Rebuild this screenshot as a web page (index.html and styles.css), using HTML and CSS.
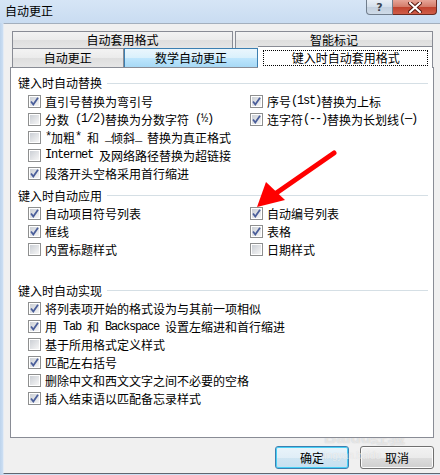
FILE: index.html
```html
<!DOCTYPE html>
<html lang="zh-CN">
<head>
<meta charset="utf-8">
<title>自动更正</title>
<link rel="stylesheet" href="styles.css">
</head>
<body>
<div class="window">
  <div class="titlebar">
    <span class="title">自动更正</span>
    <div class="caption-btns">
      <div class="cap help">?</div>
      <div class="cap close">
        <svg width="14" height="11" viewBox="0 0 14 11"><path d="M2 1 L12 10 M12 1 L2 10" stroke="#5a1a12" stroke-width="4" stroke-linecap="square"/><path d="M2 1 L12 10 M12 1 L2 10" stroke="#fff" stroke-width="2" stroke-linecap="square"/></svg>
      </div>
    </div>
  </div>
  <div class="client">
    <div class="tabs">
      <div class="tabrow row1">
        <div class="tab t1">自动套用格式</div>
        <div class="tab t2">智能标记</div>
      </div>
      <div class="tabrow row2">
        <div class="tab t3">自动更正</div>
        <div class="tab t4 hover">数学自动更正</div>
        <div class="tab t5 selected"><span class="focus">键入时自动套用格式</span></div>
      </div>
    </div>
    <div class="panel">
      <section class="group g1">
        <div class="ghead"><span>键入时自动替换</span></div>
        <div class="cols">
          <div class="col left">
            <label class="opt"><span class="cb on"></span>直引号替换为弯引号</label>
            <label class="opt"><span class="cb"></span><span>分数</span><span class="mono"> (1/2)</span><span>替换为分数字符</span><span class="mono"> (½)</span></label>
            <label class="opt"><span class="cb"></span><span class="mono">*</span><span>加粗</span><span class="mono">* </span><span>和</span><span class="mono"> _</span><span>倾斜</span><span class="mono">_ </span><span>替换为真正格式</span></label>
            <label class="opt"><span class="cb"></span><span class="mono">Internet </span><span>及网络路径替换为超链接</span></label>
            <label class="opt"><span class="cb on"></span>段落开头空格采用首行缩进</label>
          </div>
          <div class="col right">
            <label class="opt"><span class="cb on"></span><span>序号</span><span class="mono">(1st)</span><span>替换为上标</span></label>
            <label class="opt"><span class="cb on"></span><span>连字符</span><span class="mono">(--)</span><span>替换为长划线</span><span class="mono">(—)</span></label>
          </div>
        </div>
      </section>
      <section class="group g2">
        <div class="ghead"><span>键入时自动应用</span></div>
        <div class="cols">
          <div class="col left">
            <label class="opt"><span class="cb on"></span>自动项目符号列表</label>
            <label class="opt"><span class="cb on"></span>框线</label>
            <label class="opt"><span class="cb"></span>内置标题样式</label>
          </div>
          <div class="col right">
            <label class="opt"><span class="cb on"></span>自动编号列表</label>
            <label class="opt"><span class="cb on"></span>表格</label>
            <label class="opt"><span class="cb"></span>日期样式</label>
          </div>
        </div>
      </section>
      <section class="group g3">
        <div class="ghead"><span>键入时自动实现</span></div>
        <div class="cols">
          <div class="col">
            <label class="opt"><span class="cb on"></span>将列表项开始的格式设为与其前一项相似</label>
            <label class="opt"><span class="cb on"></span><span>用</span><span class="mono"> Tab </span><span>和</span><span class="mono"> Backspace </span><span>设置左缩进和首行缩进</span></label>
            <label class="opt"><span class="cb"></span>基于所用格式定义样式</label>
            <label class="opt"><span class="cb on"></span>匹配左右括号</label>
            <label class="opt"><span class="cb"></span>删除中文和西文文字之间不必要的空格</label>
            <label class="opt"><span class="cb on"></span>插入结束语以匹配备忘录样式</label>
          </div>
        </div>
      </section>
    </div>
    <div class="buttons">
      <button class="btn default">确定</button>
      <button class="btn">取消</button>
    </div>
  </div>
  <div class="watermark"><span class="wm1">Baidu经验</span><span class="wm2">jingyan.baidu</span></div>
  <svg class="arrow" width="440" height="475" viewBox="0 0 440 475">
    <line x1="334" y1="153" x2="272" y2="196" stroke="#f00" stroke-width="5" stroke-linecap="round"/>
    <polygon points="257,207 266,182 285,200" fill="#f00"/>
  </svg>
</div>
</body>
</html>
```
FILE: styles.css
```css
* { box-sizing: border-box; }
html, body { margin: 0; padding: 0; }
body {
  width: 440px;
  height: 475px;
  overflow: hidden;
  background: #b9d1ea;
  font-family: "Noto Sans CJK SC", "Noto Sans", sans-serif;
  font-size: 12px;
  color: #000;
}
.window {
  position: relative;
  width: 440px;
  height: 475px;
  background: linear-gradient(to right, #bcd3ec 0, #cddff3 3px, #cddff3 100%);
}
.titlebar {
  height: 23px;
  display: flex;
  align-items: flex-start;
  background: linear-gradient(to bottom, #d6e5f6, #c9dcf1);
}
.title {
  margin-left: 5px;
  margin-top: 3px;
  line-height: 16px;
  font-size: 12px;
}
.caption-btns {
  margin-left: auto;
  margin-right: 3px;
  display: flex;
}
.cap {
  height: 15px;
  display: flex;
  align-items: center;
  justify-content: center;
}
.help {
  width: 27px;
  border: 1px solid #707d8c;
  border-top: none;
  border-radius: 0 0 0 4px;
  background: linear-gradient(to bottom, #e9eff6, #d4dfeb 50%, #c3d0df 51%, #cfdbe8);
  color: #3b4552;
  font-family: "DejaVu Sans", sans-serif;
  font-size: 11px;
  font-weight: bold;
  line-height: 13px;
}
.close {
  width: 44px;
  border: 1px solid #6a2a21;
  border-left: none;
  border-top: none;
  border-radius: 0 0 4px 0;
  background: linear-gradient(to bottom, #e7a598, #d37a68 50%, #c0422e 51%, #d05d48);
}
.client {
  margin-left: 3px;
  width: 440px;
  height: 451px;
  border-top: 1px solid #a3afbd;
  border-left: 1px solid #e3ebf5;
  border-bottom: 1px solid #5f6670;
  background: #f0f0f0;
  padding-top: 7px;
  padding-left: 6px;
}
.tabs {
  position: relative;
  margin-left: 2px;
  width: 421px;
}
.tabrow { display: flex; }
.row1 { height: 17px; gap: 2px; }
.row2 { height: 19px; }
.tab {
  border: 1px solid #898c95;
  border-bottom: none;
  background: linear-gradient(to bottom, #f3f3f3, #ebebeb 50%, #dedede 51%, #e6e6e6);
  text-align: center;
  line-height: 16px;
  white-space: nowrap;
}
.row1 .tab { height: 17px; }
.t1 { width: 221px; }
.t2 { width: 198px; }
.row2 .tab { height: 19px; line-height: 18px; }
.t3 { width: 112px; }
.t4 { width: 135px; border-left: none; }
.hover {
  border-color: #3c7fb1;
  border-left: 1px solid #3c7fb1;
  background: linear-gradient(to bottom, #eaf6fd, #d9f0fc 50%, #bee6fd 51%, #a7d9f5);
}
.selected {
  width: 175px;
  position: relative;
  z-index: 2;
  margin-top: -2px;
  height: 22px !important;
  background: #fff;
  border-left: none;
  padding: 3px 4px 0 5px;
  line-height: 14px !important;
}
.focus {
  display: block;
  border: 1px dotted #000;
  height: 16px;
  line-height: 14px;
}
.panel {
  position: relative;
  z-index: 1;
  width: 424px;
  height: 371px;
  border: 1px solid #898c95;
  background: #fff;
  padding: 6px 5px 0 7px;
}
.ghead {
  display: flex;
  align-items: center;
  height: 18px;
  line-height: 18px;
  gap: 5px;
}
.ghead::after {
  content: "";
  flex: 1;
  height: 1px;
  background: #d5dfe5;
}
.g2 { margin-top: 4.5px; }
.g3 { margin-top: 23px; }
.cols {
  display: flex;
  padding-left: 10px;
}
.col.left { width: 222px; }
.opt {
  display: flex;
  align-items: center;
  height: 18px;
  white-space: nowrap;
}
.mono {
  font-family: "Liberation Mono", monospace;
  font-size: 12px;
  letter-spacing: -1.2px;
  white-space: pre;
}
.cb {
  position: relative;
  flex: none;
  width: 13px;
  height: 13px;
  margin-right: 4px;
  border: 1px solid #8e8f8f;
  background: #fff;
}
.cb::before {
  content: "";
  position: absolute;
  left: 1px; top: 1px; right: 1px; bottom: 1px;
  background: linear-gradient(135deg, #cbcfd5, #f6f6f6);
}
.cb.on::after {
  content: "";
  position: absolute;
  left: 1px; top: 1px;
  width: 9px; height: 9px;
  background: url("data:image/svg+xml;utf8,<svg xmlns='http://www.w3.org/2000/svg' width='9' height='9' viewBox='0 0 9 9'><path d='M1 4.5 L3.3 7.5 L8 0.8' fill='none' stroke='%234a5e9a' stroke-width='1.8'/></svg>") no-repeat;
}
.buttons {
  width: 424px;
  margin-top: 8px;
  display: flex;
  justify-content: flex-end;
  gap: 11px;
}
.btn {
  width: 74px;
  height: 23px;
  border: 1px solid #707070;
  border-radius: 3px;
  background: linear-gradient(to bottom, #f2f2f2, #ebebeb 50%, #dddddd 51%, #cfcfcf);
  font-family: "Noto Sans CJK SC", sans-serif;
  font-size: 12px;
  line-height: 16px;
  padding: 0;
  color: #000;
  box-shadow: inset 0 0 0 1px #fcfcfc;
}
.btn.default {
  border-color: #3c7fb1;
  box-shadow: inset 0 0 0 1px #48d0f5;
  background: linear-gradient(to bottom, #e9f4fa, #e0eef7 50%, #cfe5f2 51%, #c6e0f0);
}
.watermark {
  position: absolute;
  left: 322px;
  top: 428px;
  display: flex;
  flex-direction: column;
  pointer-events: none;
}
.wm1 {
  font-family: "Liberation Sans", sans-serif;
  font-size: 17px;
  font-weight: bold;
  color: rgba(255,255,255,0.55);
  text-shadow: 0 0 1px rgba(150,150,150,0.5);
  line-height: 20px;
  margin-left: 2px;
}
.wm2 {
  font-family: "Liberation Sans", sans-serif;
  font-size: 10px;
  color: rgba(255,255,255,0.6);
  text-shadow: 0 0 1px rgba(160,160,160,0.4);
  margin-top: 2px;
}
.arrow {
  position: absolute;
  left: 0;
  top: 0;
  z-index: 5;
  pointer-events: none;
}
```
